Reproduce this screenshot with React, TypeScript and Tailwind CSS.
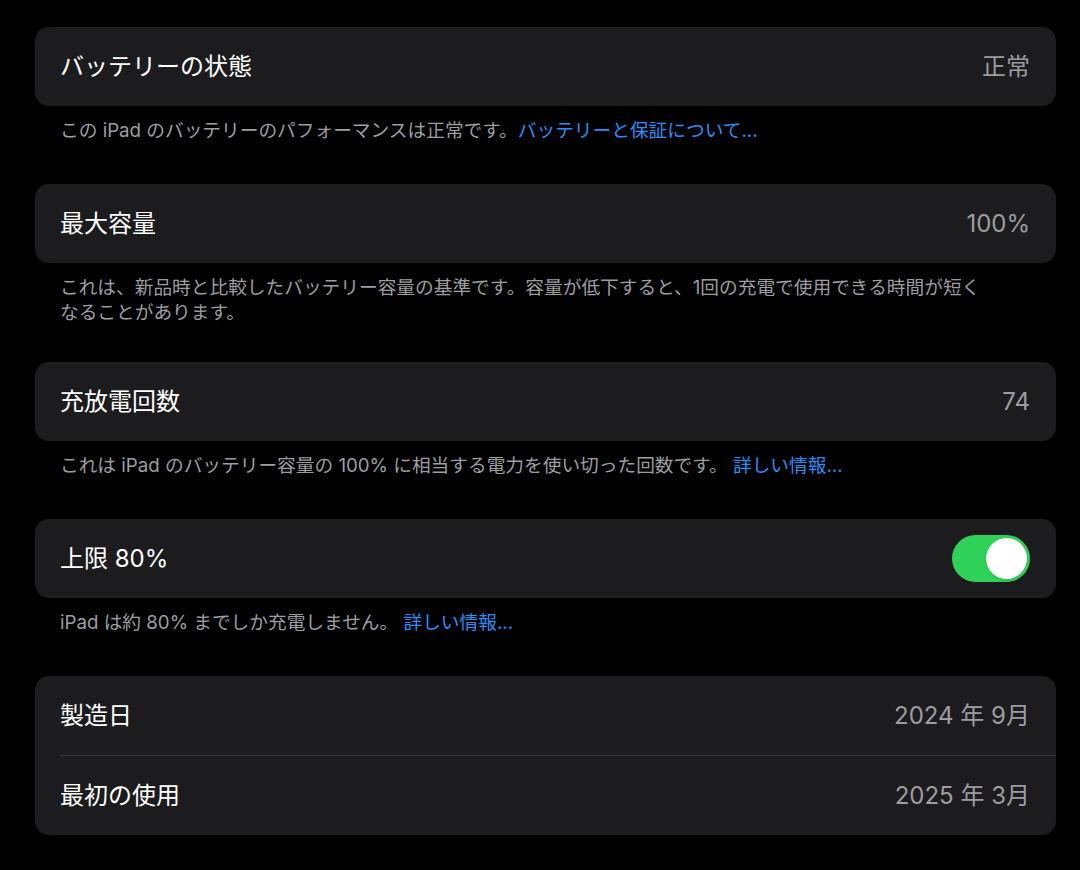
import React from "react";

const FONT = {
  fontFamily: 'Inter, "Noto Sans CJK JP", "Noto Sans", sans-serif',
};

function Row({ label, value, children }: { label: string; value?: string; children?: React.ReactNode }) {
  return (
    <div className="flex h-[79px] items-center justify-between pl-[25px] pr-[26px]">
      <span className="text-[24px] text-white">{label}</span>
      {value ? <span className="text-[24px] text-[#9c9ca1]">{value}</span> : children}
    </div>
  );
}

function Card({ children }: { children: React.ReactNode }) {
  return <div className="overflow-hidden rounded-[14px] bg-[#1c1c1e]">{children}</div>;
}

function Note({ children, wide }: { children: React.ReactNode; wide?: boolean }) {
  // two-line notes have looser line spacing
  const spacing = wide ? "pt-[12px] pb-[37px] leading-[25px]" : "pt-[14px] pb-[43px] leading-[21px]";
  return (
    <p className={`pl-[25px] pr-[30px] text-[18.7px] text-[#9d9da2] ${spacing}`}>
      {children}
    </p>
  );
}

function Link({ children }: { children: React.ReactNode }) {
  return <span className="text-[#2b8ef6]">{children}</span>;
}

function Toggle() {
  return (
    <div className="flex h-[47px] w-[78px] items-center justify-end rounded-full bg-[#30d158] px-[3px]">
      <div className="h-[41px] w-[41px] rounded-full bg-white shadow" />
    </div>
  );
}

export default function App() {
  return (
    <div className="min-h-[870px] w-full bg-black pl-[35px] pr-[24px] pt-[27px]" style={FONT}>
      <Card>
        <Row label="バッテリーの状態" value="正常" />
      </Card>
      <Note>
        この iPad のバッテリーのパフォーマンスは正常です。<Link>バッテリーと保証について...</Link>
      </Note>

      <Card>
        <Row label="最大容量" value="100%" />
      </Card>
      <Note wide>
        これは、新品時と比較したバッテリー容量の基準です。容量が低下すると、1回の充電で使用できる時間が短く
        <br />
        なることがあります。
      </Note>

      <Card>
        <Row label="充放電回数" value="74" />
      </Card>
      <Note>
        これは iPad のバッテリー容量の 100% に相当する電力を使い切った回数です。 <Link>詳しい情報...</Link>
      </Note>

      <Card>
        <Row label="上限 80%">
          <Toggle />
        </Row>
      </Card>
      <Note>
        iPad は約 80% までしか充電しません。 <Link>詳しい情報...</Link>
      </Note>

      <Card>
        <Row label="製造日" value="2024 年 9月" />
        <div className="ml-[25px] h-px bg-[#38383a]" />
        <Row label="最初の使用" value="2025 年 3月" />
      </Card>
    </div>
  );
}
